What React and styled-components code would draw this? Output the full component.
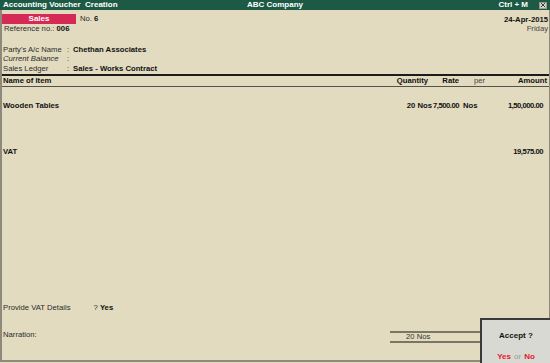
import React from "react";
import styled, { createGlobalStyle } from "styled-components";

const GlobalStyle = createGlobalStyle`
  html, body {
    margin: 0;
    padding: 0;
    background: #e2dbbf;
  }
  body {
    font-family: "Liberation Sans", Arial, sans-serif;
  }
  * {
    box-sizing: border-box;
  }
`;

const items = [
  {
    name: "Wooden Tables",
    qty: "20 Nos",
    rate: "7,500.00",
    per: "Nos",
    amount: "1,50,000.00",
  },
];

function App() {
  return (
    <Screen>
      <GlobalStyle />
      <TitleBar>
        <TitleLeft>Accounting Voucher&nbsp; Creation</TitleLeft>
        <TitleCenter>ABC Company</TitleCenter>
        <TitleRight>
          Ctrl + M
          <CloseBox>
            <svg width="7" height="6" viewBox="0 0 7 6">
              <path d="M1 0.5 L6 5.5 M6 0.5 L1 5.5" stroke="#333" strokeWidth="1.1" />
            </svg>
          </CloseBox>
        </TitleRight>
      </TitleBar>

      <Body>
        <TopRow>
          <div>
            <VoucherLine>
              <TypeBadge>Sales</TypeBadge>
              <Text>
                No. <Strong>6</Strong>
              </Text>
            </VoucherLine>
            <RefLine>
              Reference no.: <Strong>006</Strong>
            </RefLine>
          </div>
          <DateBlock>
            <Strong>24-Apr-2015</Strong>
            <DayText>Friday</DayText>
          </DateBlock>
        </TopRow>

        <PartyBlock>
          <FieldRow>
            <Text>Party's A/c Name</Text>
            <Text>:</Text>
            <Strong>Chethan Associates</Strong>
          </FieldRow>
          <FieldRow>
            <Text $italic>Current Balance</Text>
            <Text>:</Text>
            <span />
          </FieldRow>
          <FieldRow>
            <Text>Sales Ledger</Text>
            <Text>:</Text>
            <Strong>Sales - Works Contract</Strong>
          </FieldRow>
        </PartyBlock>

        <Table>
          <HeaderRow>
            <Cell $bold>Name of Item</Cell>
            <Cell $bold $align="right" $pad="0 4px 0 0">Quantity</Cell>
            <Cell $bold $align="right" $pad="0 1px 0 0">Rate</Cell>
            <Cell $pad="0 0 0 14px">per</Cell>
            <Cell $bold $align="right" $pad="0 1px 0 0">Amount</Cell>
          </HeaderRow>
          {items.map((item) => (
            <ItemRow key={item.name}>
              <Cell $bold>{item.name}</Cell>
              <Cell $bold $align="right">{item.qty}</Cell>
              <Cell $bold $num $align="right" $pad="0 1px 0 0">{item.rate}</Cell>
              <Cell $bold $pad="0 0 0 3px">{item.per}</Cell>
              <Cell $bold $num $align="right" $pad="0 5px 0 0">{item.amount}</Cell>
            </ItemRow>
          ))}
          <TaxRow>
            <Cell $bold>VAT</Cell>
            <Cell />
            <Cell />
            <Cell />
            <Cell $bold $num $align="right" $pad="0 5px 0 0">19,575.00</Cell>
          </TaxRow>
        </Table>

        <Footer>
          <VatRow>
            <Text>Provide VAT Details</Text>
            <Text>
              ? <Strong>Yes</Strong>
            </Text>
          </VatRow>
          <NarrationRow>
            <NarrationLabel>Narration:</NarrationLabel>
            <NarrationField>20 Nos</NarrationField>
          </NarrationRow>
        </Footer>
      </Body>

      <AcceptBox>
        <AcceptTitle>Accept ?</AcceptTitle>
        <AcceptChoice>
          <Choice>Yes</Choice>
          <Or>or</Or>
          <Choice>No</Choice>
        </AcceptChoice>
      </AcceptBox>
    </Screen>
  );
}

export default App;

const Screen = styled.div`
  position: relative;
  width: 550px;
  height: 363px;
  display: flex;
  flex-direction: column;
  overflow: hidden;
  background: #e2dbbf;
  color: #2b2b2b;
  font-size: 7.7px;
`;

const TitleBar = styled.div`
  height: 10px;
  display: grid;
  grid-template-columns: 1fr auto 1fr;
  align-items: center;
  padding: 0 3px;
  background: #1d5a46;
  color: #ffffff;
  font-size: 8px;
  font-weight: bold;
  line-height: 10px;
  white-space: nowrap;
`;

const TitleLeft = styled.div``;

const TitleCenter = styled.div``;

const TitleRight = styled.div`
  justify-self: end;
  display: flex;
  align-items: center;
  gap: 11px;
`;

const CloseBox = styled.div`
  width: 8px;
  height: 7px;
  display: flex;
  align-items: center;
  justify-content: center;
  background: #d4d4cc;
  border: 1px solid #9a9a90;
`;

const Body = styled.div`
  flex: 1;
  display: flex;
  flex-direction: column;
  padding: 4px 1px 0 1px;
  margin-bottom: 1px;
  border-left: 2px solid #8d897c;
  border-right: 1px solid #8d897c;
  border-bottom: 2px solid #8d897c;
`;

const Text = styled.span`
  font-style: ${(p) => (p.$italic ? "italic" : "normal")};
  white-space: nowrap;
`;

const Strong = styled.span`
  font-weight: bold;
  color: #111;
  white-space: nowrap;
`;

const TopRow = styled.div`
  display: flex;
  justify-content: space-between;
`;

const VoucherLine = styled.div`
  display: flex;
  align-items: center;
  gap: 4px;
  height: 10px;
  line-height: 10px;
`;

const TypeBadge = styled.div`
  width: 74px;
  height: 10px;
  margin-left: -1px;
  background: #d52a56;
  color: #ffffff;
  font-size: 8px;
  font-weight: bold;
  text-align: center;
  line-height: 10px;
`;

const RefLine = styled.div`
  height: 10px;
  line-height: 10px;
  padding-left: 1px;
`;

const DateBlock = styled.div`
  display: flex;
  flex-direction: column;
  align-items: flex-end;
  padding-top: 1px;
  line-height: 9px;
`;

const DayText = styled.span`
  color: #444;
`;

const PartyBlock = styled.div`
  margin-top: 10.5px;
  display: flex;
  flex-direction: column;
`;

const FieldRow = styled.div`
  display: grid;
  grid-template-columns: 64px 6px auto;
  height: 9.5px;
  line-height: 9.5px;
`;

const Table = styled.div`
  flex: 1;
  margin: 1px -1px 0;
  padding: 0 1px;
  border-top: 2px solid #1c1c1c;
`;

const Row = styled.div`
  display: grid;
  grid-template-columns: 1fr 60px 28px 30px 58px;
  height: 10px;
  line-height: 10px;
`;

const HeaderRow = styled(Row)`
  margin: 0 -1px;
  padding: 0 1px;
  height: 11px;
  border-bottom: 1px solid #55524a;
`;

const ItemRow = styled(Row)`
  margin-top: 14px;
`;

const TaxRow = styled(Row)`
  margin-top: 36px;
`;

const Cell = styled.div`
  text-align: ${(p) => p.$align || "left"};
  padding: ${(p) => p.$pad || "0"};
  font-weight: ${(p) => (p.$bold ? "bold" : "normal")};
  color: ${(p) => (p.$bold ? "#111" : "#444")};
  letter-spacing: ${(p) => (p.$num ? "-0.5px" : "0")};
  white-space: nowrap;
`;

const Footer = styled.div`
  display: flex;
  flex-direction: column;
  gap: 16px;
  padding-bottom: 17px;
`;

const VatRow = styled.div`
  display: grid;
  grid-template-columns: 90.5px auto;
  height: 10px;
  line-height: 10px;
`;

const NarrationRow = styled.div`
  display: grid;
  grid-template-columns: 387px 90px;
  height: 14px;
`;

const NarrationLabel = styled.div`
  line-height: 12px;
`;

const NarrationField = styled.div`
  margin-top: 2px;
  height: 12px;
  padding-left: 16px;
  border-top: 2px solid #7a7565;
  border-bottom: 2px solid #7a7565;
  line-height: 8px;
  color: #333;
`;

const AcceptBox = styled.div`
  position: absolute;
  right: 0;
  bottom: 0;
  width: 70px;
  height: 45px;
  display: flex;
  flex-direction: column;
  align-items: center;
  gap: 11px;
  padding-top: 11px;
  background: #d9d9d3;
  border-top: 2px solid #3a3a3a;
  border-left: 2px solid #3a3a3a;
`;

const AcceptTitle = styled.div`
  font-size: 8px;
  font-weight: bold;
  color: #111;
  line-height: 10px;
`;

const AcceptChoice = styled.div`
  display: flex;
  gap: 3px;
  font-size: 8px;
  line-height: 10px;
`;

const Choice = styled.span`
  color: #e3212b;
  font-weight: bold;
`;

const Or = styled.span`
  color: #9a9a94;
`;
